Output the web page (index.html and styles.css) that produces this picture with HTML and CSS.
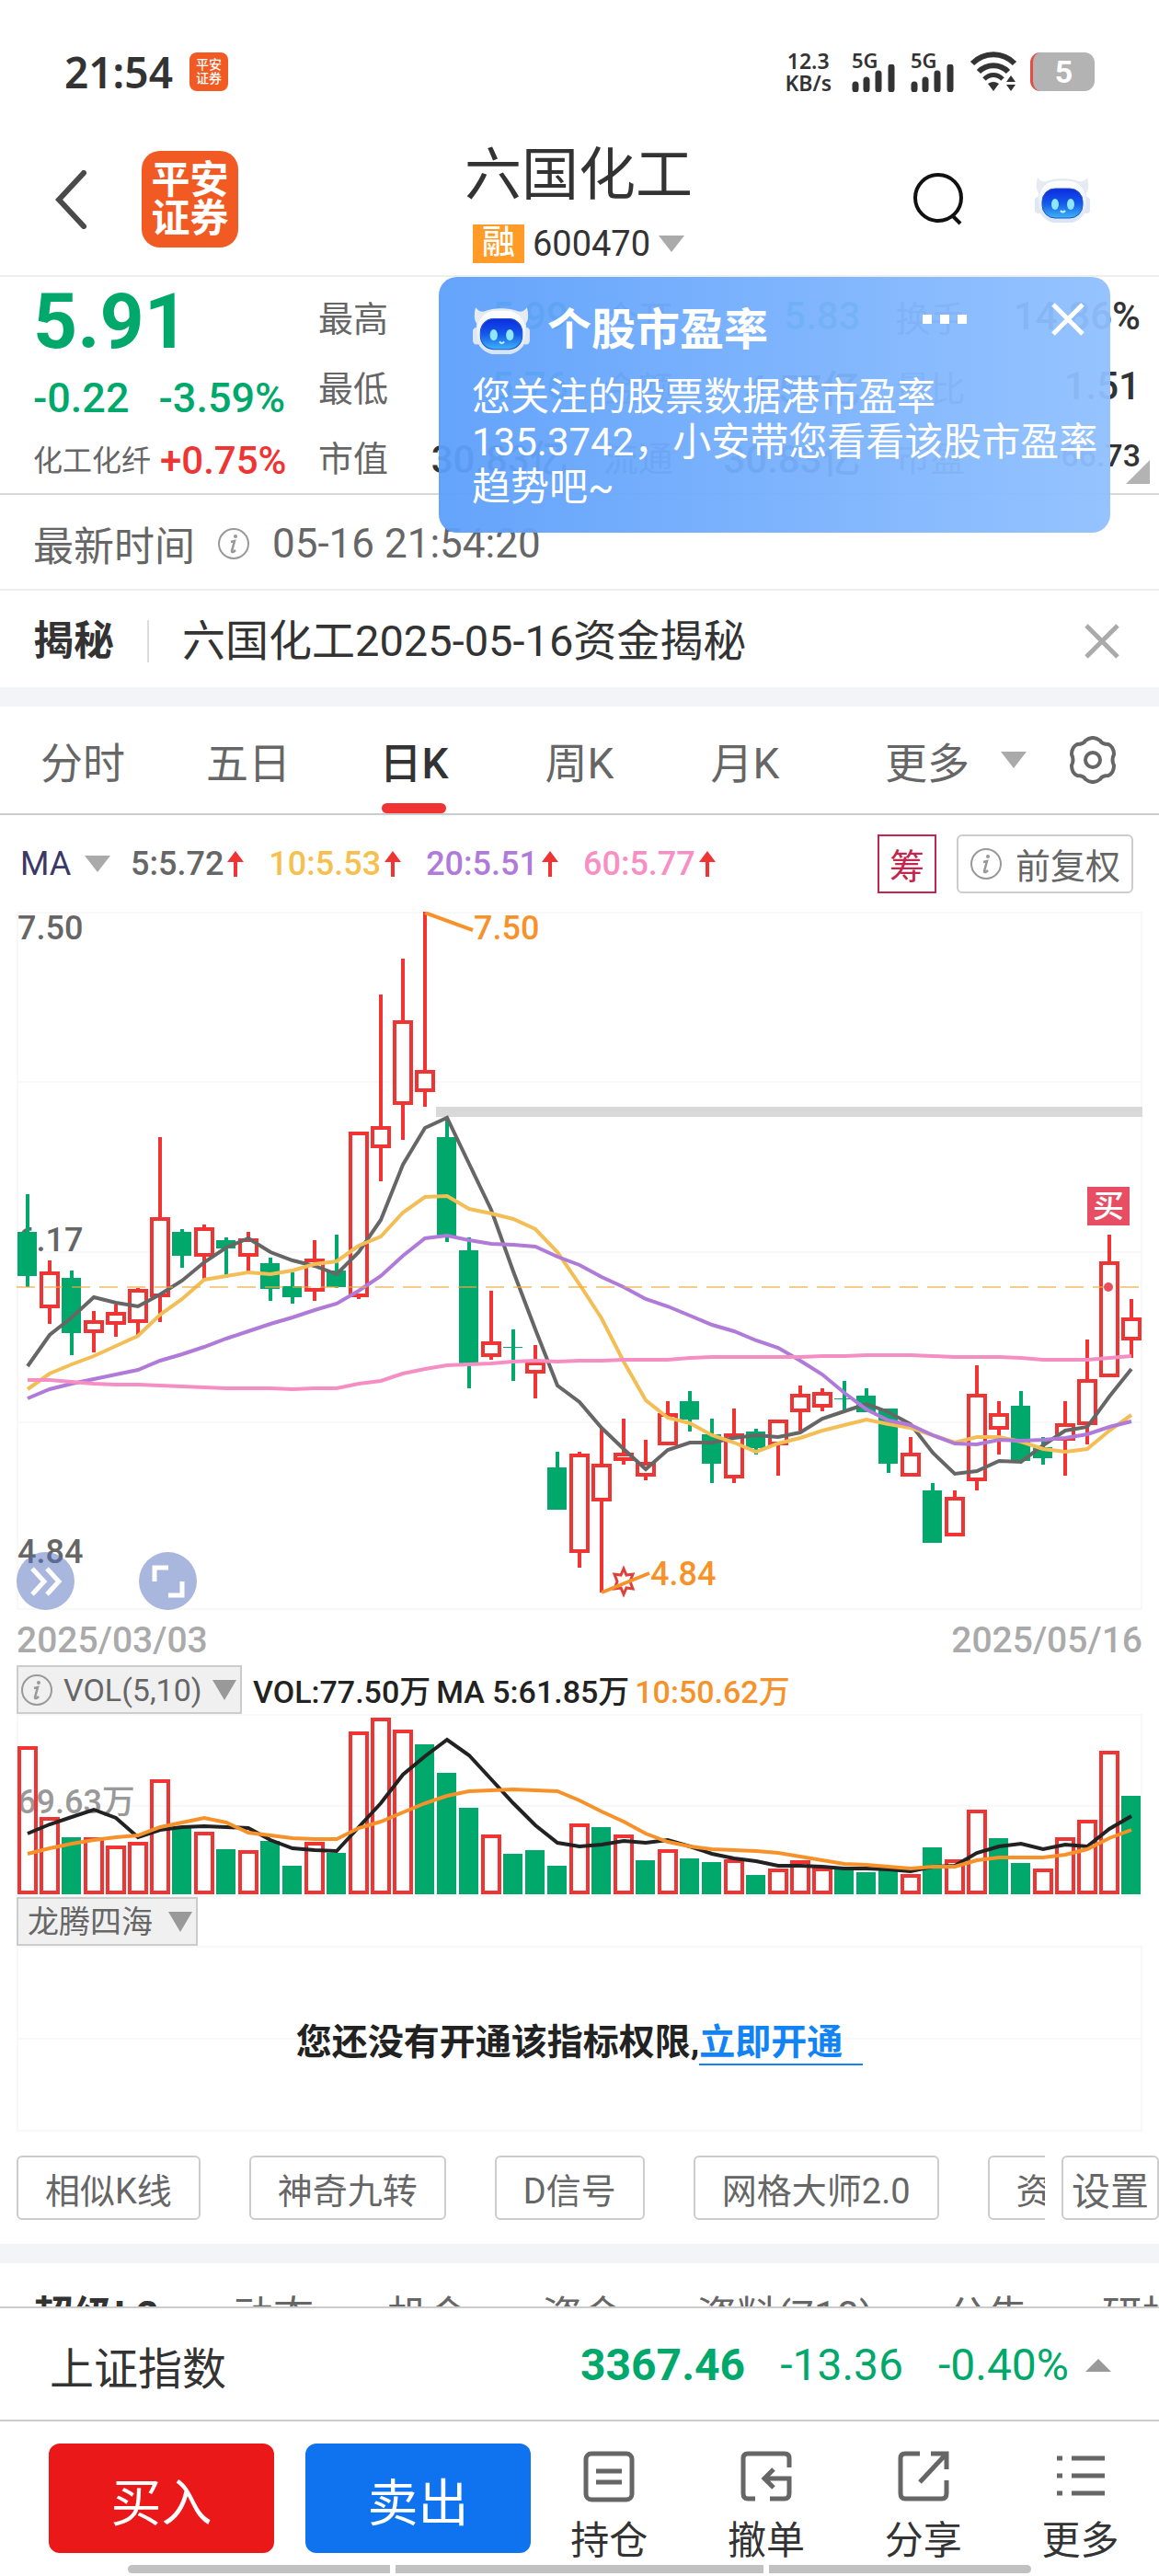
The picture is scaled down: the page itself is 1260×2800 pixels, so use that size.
FILE: index.html
```html
<!DOCTYPE html>
<html lang="zh-CN">
<head>
  <meta charset="UTF-8">
  <meta name="viewport" content="width=device-width, initial-scale=1.0">
  <title>六国化工 600470</title>
  <link rel="stylesheet" href="styles.css">
</head>
<body>

  <svg class="defs" aria-hidden="true">
    <defs>
      <linearGradient id="face" x1="0" y1="0" x2="0" y2="1">
        <stop offset="0" stop-color="#0d2be0" />
        <stop offset="0.5" stop-color="#1459ea" />
        <stop offset="1" stop-color="#3fb4f5" />
      </linearGradient>
      <linearGradient id="shell" x1="0" y1="0" x2="0" y2="1">
        <stop offset="0" stop-color="#ffffff" />
        <stop offset="1" stop-color="#d5e4f8" />
      </linearGradient>
    </defs>
    <symbol id="robot" viewBox="0 0 62 50">
      <rect x="1" y="22" width="8" height="18" rx="4" fill="#dfe7f3" />
      <rect x="53" y="22" width="8" height="18" rx="4" fill="#dfe7f3" />
      <path d="M4 1C2 8 2 16 7 20H55C60 16 60 8 58 1C55 5 52 6 48 5C40 1 22 1 14 5C10 6 7 5 4 1Z" fill="#e6eaf1" />
      <rect x="5" y="4" width="52" height="46" rx="20" fill="url(#shell)" stroke="#e3e8f0" />
      <rect x="9" y="13" width="44" height="32" rx="14" fill="url(#face)" stroke="#2152c8" />
      <ellipse cx="23" cy="30" rx="4" ry="6" fill="#8fe6ff" />
      <ellipse cx="40" cy="30" rx="4" ry="6" fill="#8fe6ff" />
      <path d="M29 37q2.500 3 5 0" fill="none" stroke="#bdf1ff" stroke-width="2" />
    </symbol>
    <symbol id="signal" viewBox="0 0 50 30">
      <path d="M4 22v5M16 17v10M29 10v17M43 3v24" stroke="#333" stroke-width="7" stroke-linecap="round" />
    </symbol>
    <symbol id="info" viewBox="0 0 36 36">
      <circle cx="18" cy="18" r="16" fill="none" stroke="#999" stroke-width="2" />
      <circle cx="20" cy="10" r="2" fill="#999" />
      <path d="M15 16l4-1-3 11c0 2 2 1 4-1" fill="none" stroke="#999" stroke-width="2.500" />
    </symbol>
    <symbol id="up" viewBox="0 0 18 28">
      <path d="M9 0L18 12H11V28H7V12H0Z" fill="#f03434" />
    </symbol>
  </svg>

  <div class="app">
    <!-- 状态栏 -->
    <div class="statusbar">
      <span class="clock">21:54</span>
      <span class="logo logo-small"><span>平安</span><span>证券</span></span>
      <div class="status-right">
        <div class="speed"><span>12.3</span><span>KB/s</span></div>
        <div class="cell"><span>5G</span><svg width="50" height="30"><use href="#signal" /></svg></div>
        <div class="cell"><span>5G</span><svg width="50" height="30"><use href="#signal" /></svg></div>
        <svg class="wifi" width="52" height="44" viewBox="0 0 52 44">
          <path d="M3 13C16 0 36 0 49 13" fill="none" stroke="#333" stroke-width="6" />
          <path d="M10 22C19 13 33 13 42 22" fill="none" stroke="#333" stroke-width="6" />
          <path d="M16 30C22 24 30 24 36 30" fill="none" stroke="#333" stroke-width="5" />
          <path d="M20 35Q26 31 32 35L26 43Z" fill="#333" />
          <path d="M40 33l5-7 5 7zM40 36h10l-5 7z" fill="#333" />
        </svg>
        <span class="battery">5</span>
      </div>
    </div>

    <!-- 标题栏 -->
    <header class="header">
      <div class="header-left">
        <button class="icon-btn" aria-label="返回">
          <svg width="34" height="64" viewBox="0 0 34 64"><path d="M31 3L4 32L31 61" fill="none" stroke="#4a4a4a" stroke-width="6" stroke-linecap="round" /></svg>
        </button>
        <span class="logo"><span>平安</span><span>证券</span></span>
      </div>
      <div class="header-title">
        <h1>六国化工</h1>
        <div class="code"><span class="rong">融</span>600470<span class="tri"></span></div>
      </div>
      <div class="header-right">
        <button class="icon-btn" aria-label="搜索">
          <svg width="56" height="60" viewBox="0 0 56 60"><circle cx="28" cy="28" r="25" fill="none" stroke="#111" stroke-width="4" /><path d="M43 47L52 56" stroke="#111" stroke-width="4" /></svg>
        </button>
        <button class="icon-btn" aria-label="小安">
          <svg width="62" height="50"><use href="#robot" /></svg>
        </button>
      </div>
    </header>

    <main class="content">
      <!-- 行情 -->
      <section class="quote">
        <div class="quote-price">
          <div class="price">5.91</div>
          <div class="change"><span>-0.22</span><span>-3.59%</span></div>
          <div class="sector">化工化纤 <b>+0.75%</b></div>
        </div>
        <table class="quote-table">
          <tr><th>最高</th><td class="down">5.99</td><th>今开</th><td class="down">5.83</td><th>换手</th><td>14.86%</td></tr>
          <tr><th>最低</th><td class="down">5.76</td><th>金额</th><td>4.57亿</td><th>量比</th><td>1.51</td></tr>
          <tr><th>市值</th><td>30.83亿</th><th>流通</th><td>30.83亿</td><th>市盈</th><td class="small">-66.73</td></tr>
        </table>
        <span class="corner"></span>

        <!-- 小安提示 -->
        <aside class="popup">
          <div class="popup-head">
            <svg width="64" height="52"><use href="#robot" /></svg>
            <h2>个股市盈率</h2>
            <button class="icon-btn popup-more" aria-label="更多">
              <svg width="48" height="12" viewBox="0 0 48 12"><path d="M0 1h10v10H0zM19 1h10v10H19zM38 1h10v10H38z" fill="#fff" /></svg>
            </button>
            <button class="icon-btn" aria-label="关闭">
              <svg width="36" height="36" viewBox="0 0 36 36"><path d="M2 2L34 34M34 2L2 34" stroke="#fff" stroke-width="5" /></svg>
            </button>
          </div>
          <p>您关注的股票数据港市盈率<br>135.3742，小安带您看看该股市盈率<br>趋势吧~</p>
        </aside>
      </section>

      <div class="time-row">
        <span>最新时间</span>
        <svg width="36" height="36"><use href="#info" /></svg>
        <span>05-16 21:54:20</span>
      </div>

      <div class="notice">
        <strong>揭秘</strong>
        <a href="#">六国化工2025-05-16资金揭秘</a>
        <button class="icon-btn" aria-label="关闭">
          <svg width="40" height="40" viewBox="0 0 40 40"><path d="M3 3L37 37M37 3L3 37" stroke="#aaa" stroke-width="5" /></svg>
        </button>
      </div>

      <div class="band"></div>

      <nav class="tabs">
        <button>分时</button>
        <button>五日</button>
        <button class="active">日K</button>
        <button>周K</button>
        <button>月K</button>
        <button class="tab-more">更多<span class="tri"></span></button>
        <button class="icon-btn" aria-label="图表设置">
          <svg width="52" height="52" viewBox="0 0 52 52">
            <path d="M18 5Q26 -1 34 5Q36 9 43 9Q49 12 49 20Q46 26 49 32Q49 40 43 43Q36 43 34 47Q26 53 18 47Q16 43 9 43Q3 40 3 32Q6 26 3 20Q3 12 9 9Q16 9 18 5Z" fill="none" stroke="#666" stroke-width="4" />
            <circle cx="26" cy="26" r="8" fill="none" stroke="#666" stroke-width="4" />
          </svg>
        </button>
      </nav>

      <div class="ma-row">
        <label class="ma-pick"><select aria-label="均线指标"><option>MA</option></select><span class="tri"></span></label>
        <div class="ma-list">
          <span class="ma ma5">5:5.72<svg width="18" height="28"><use href="#up" /></svg></span>
          <span class="ma ma10">10:5.53<svg width="18" height="28"><use href="#up" /></svg></span>
          <span class="ma ma20">20:5.51<svg width="18" height="28"><use href="#up" /></svg></span>
          <span class="ma ma60">60:5.77<svg width="18" height="28"><use href="#up" /></svg></span>
        </div>
        <button class="chips">筹</button>
        <button class="adjust"><svg width="36" height="36"><use href="#info" /></svg>前复权</button>
      </div>

      <!-- K线图 -->
      <section class="charts">
        <div class="kchart">
          <svg id="kline" viewBox="0 0 1224 759" role="img" aria-label="日K线"></svg>
          <div class="kchart-tools">
            <button aria-label="展开"><svg width="36" height="32" viewBox="0 0 36 32"><path d="M3 2L16 16L3 30M19 2L32 16L19 30" fill="none" stroke="#fff" stroke-width="5" /></svg></button>
            <button aria-label="全屏"><svg width="36" height="36" viewBox="0 0 36 36"><path d="M3 18V3H18M33 18V33H18" fill="none" stroke="#fff" stroke-width="5" /></svg></button>
          </div>
        </div>
        <div class="dates"><span>2025/03/03</span><span>2025/05/16</span></div>

        <div class="vol-head">
          <label class="picker"><svg width="36" height="36"><use href="#info" /></svg><select aria-label="成交量指标"><option>VOL(5,10)</option></select><span class="tri"></span></label>
          <span>VOL:77.50万</span><span>MA 5:61.85万</span><span class="orange">10:50.62万</span>
        </div>
        <svg id="volume" viewBox="0 0 1224 199" role="img" aria-label="成交量"></svg>

        <label class="picker"><select aria-label="副图指标"><option>龙腾四海</option></select><span class="tri"></span></label>
        <div class="locked"><p>您还没有开通该指标权限,<a href="#">立即开通</a></p></div>
      </section>

      <div class="pills">
        <div class="pill-list">
          <button>相似K线</button>
          <button>神奇九转</button>
          <button>D信号</button>
          <button>网格大师2.0</button>
          <button>资金</button>
        </div>
        <button class="pill-set">设置</button>
      </div>

      <div class="band"></div>

      <nav class="feed-tabs">
        <a href="#" class="active">超级L2</a>
        <a href="#">动态</a>
        <a href="#">机会</a>
        <a href="#">资金</a>
        <a href="#">资料(710)</a>
        <a href="#">公告</a>
        <a href="#">研报</a>
      </nav>
    </main>

    <!-- 底部 -->
    <footer class="footer">
      <div class="index-bar">
        <span class="index-name">上证指数</span>
        <b>3367.46</b><span>-13.36</span><span>-0.40%</span>
        <span class="tri tri-up"></span>
      </div>
      <div class="actions">
        <button class="trade buy">买入</button>
        <button class="trade sell">卖出</button>
        <button class="action">
          <svg width="56" height="56" viewBox="0 0 56 56"><rect x="3" y="3" width="50" height="50" rx="6" /><path d="M14 22H42M14 34H42" /></svg>持仓
        </button>
        <button class="action">
          <svg width="56" height="56" viewBox="0 0 56 56"><path d="M53 18V8Q53 3 48 3H8Q3 3 3 8V46Q3 52 8 52H16M32 52H48Q53 52 53 46V30H26M36 20L26 30L36 40" /></svg>撤单
        </button>
        <button class="action">
          <svg width="56" height="56" viewBox="0 0 56 56"><path d="M24 3H8Q3 3 3 8V46Q3 52 8 52H48Q53 52 53 46V32M36 3H53V20M53 3L24 34" /></svg>分享
        </button>
        <button class="action">
          <svg width="56" height="56" viewBox="0 0 56 56"><path d="M2 8H8M18 8H54M2 27H8M18 27H54M2 46H8M18 46H54" /></svg>更多
        </button>
      </div>
      <div class="homebar"><i></i><i></i><i></i></div>
    </footer>
  </div>

  <script src="chart.js"></script>
</body>
</html>
```

FILE: styles.css
```css
* {
  box-sizing: border-box;
}
body {
  margin: 0;
  background: #fff;
  color: #333;
  font-family: Roboto, "Noto Sans CJK SC", sans-serif;
  font-size: 38px;
}
button, select {
  font: inherit;
  color: inherit;
  background: none;
  border: none;
  padding: 0;
  margin: 0;
  appearance: none;
  white-space: nowrap;
  cursor: pointer;
}
a {
  color: inherit;
  text-decoration: none;
}
svg {
  flex: none;
}
h1, h2, p {
  margin: 0;
}
.defs {
  position: absolute;
  width: 0;
  height: 0;
}
.app {
  display: flex;
  flex-direction: column;
  height: 100vh;
}
.icon-btn {
  display: flex;
}
.tri {
  border: 14px solid transparent;
  border-top: 18px solid #aaa;
  border-bottom: 0;
}
.tri-up {
  border-top: 0;
  border-bottom: 14px solid #999;
}

/* 状态栏 */
.statusbar {
  display: flex;
  align-items: center;
  flex: none;
  height: 128px;
  padding: 28px 70px 0;
}
.clock {
  font-family: "Noto Sans", sans-serif;
  font-size: 46px;
  font-weight: 600;
}
.logo {
  display: flex;
  flex-direction: column;
  align-items: center;
  justify-content: center;
  width: 105px;
  height: 105px;
  border-radius: 20px;
  background: #f15a22;
  color: #fff;
  font-size: 42px;
  font-weight: bold;
  line-height: 42px;
}
.logo-small {
  width: 42px;
  height: 42px;
  margin-left: 18px;
  border-radius: 8px;
  font-size: 14px;
  font-weight: 500;
  line-height: 15px;
}
.status-right {
  display: flex;
  align-items: center;
  gap: 14px;
  margin-left: auto;
}
.speed {
  display: flex;
  flex-direction: column;
  align-items: center;
  margin-right: 8px;
  font-family: "Noto Sans", sans-serif;
  font-size: 23px;
  font-weight: 600;
  line-height: 24px;
}
.cell {
  position: relative;
  padding-top: 14px;
}
.cell svg {
  display: block;
}
.cell span {
  position: absolute;
  top: -1px;
  left: 0;
  font-family: "Noto Sans", sans-serif;
  font-size: 22px;
  font-weight: 600;
  line-height: 20px;
}
.battery {
  width: 70px;
  height: 42px;
  border-left: 3px solid #e64c43;
  border-radius: 11px;
  background: #b3b3b3;
  color: #fff;
  font-size: 34px;
  font-weight: bold;
  line-height: 42px;
  text-align: center;
}

/* 标题栏 */
.header {
  display: grid;
  grid-template-columns: 1fr auto 1fr;
  align-items: center;
  flex: none;
  height: 173px;
  padding: 6px 74px 0 60px;
  border-bottom: 2px solid #eee;
}
.header-left {
  display: flex;
  align-items: center;
  gap: 60px;
}
.header-title {
  display: flex;
  flex-direction: column;
  align-items: center;
  gap: 16px;
  padding: 8px 0 0 12px;
}
.header-title h1 {
  font-size: 62px;
  font-weight: normal;
  line-height: 72px;
}
.code {
  display: flex;
  align-items: center;
  gap: 9px;
  line-height: 44px;
}
.rong {
  width: 56px;
  height: 42px;
  background: #ff9b26;
  color: #fff;
  font-size: 36px;
  font-weight: 500;
  line-height: 40px;
  text-align: center;
}
.header-right {
  display: flex;
  align-items: center;
  justify-content: flex-end;
  gap: 76px;
}

.content {
  flex: 1;
  min-height: 0;
  overflow: hidden;
}

/* 行情 */
.quote {
  position: relative;
  display: flex;
  height: 237px;
  padding: 4px 20px 0 36px;
  border-bottom: 2px solid #d8d8d8;
}
.quote-price {
  flex: none;
  width: 310px;
  padding-top: 4px;
  color: #00a96b;
}
.price {
  font-size: 84px;
  font-weight: bold;
  line-height: 82px;
}
.change {
  display: flex;
  gap: 32px;
  margin: 20px 0 24px;
  font-size: 45px;
  font-weight: 500;
  line-height: 44px;
}
.sector {
  display: flex;
  align-items: center;
  gap: 10px;
  color: #666;
  font-size: 32px;
  line-height: 44px;
}
.sector b {
  color: #f03434;
  font-size: 42px;
  font-weight: 500;
}
.quote-table {
  flex: 1;
  height: 228px;
  border-collapse: collapse;
}
.quote-table th, .quote-table td {
  height: 76px;
  padding: 0;
  white-space: nowrap;
}
.quote-table th {
  color: #666;
  font-weight: normal;
  text-align: left;
}
.quote-table td + th {
  padding-left: 38px;
}
.quote-table td {
  font-size: 42px;
  font-weight: 500;
  text-align: right;
}
.quote-table .small {
  font-size: 34px;
}
.quote-table .down {
  color: #00a96b;
}
.corner {
  position: absolute;
  right: 10px;
  bottom: 10px;
  border-bottom: 26px solid #b3b3b3;
  border-left: 26px solid transparent;
}
.popup {
  position: absolute;
  top: 0;
  right: 53px;
  z-index: 1;
  width: 730px;
  height: 278px;
  padding: 28px 28px 0 36px;
  border-radius: 20px;
  background: linear-gradient(90deg, rgba(92, 159, 251, .95), rgba(144, 192, 255, .95));
  color: #fff;
}
.popup-head {
  display: flex;
  align-items: center;
  height: 60px;
}
.popup-head h2 {
  flex: 1;
  margin-left: 18px;
  font-size: 48px;
  line-height: 60px;
}
.popup-head button {
  margin-bottom: 24px;
}
.popup-head .popup-more {
  margin-right: 92px;
}
.popup p {
  margin-top: 18px;
  font-size: 42px;
  line-height: 49px;
  white-space: nowrap;
}

.time-row {
  display: flex;
  align-items: center;
  gap: 24px;
  height: 104px;
  padding: 4px 38px 0 36px;
  border-bottom: 2px solid #eee;
  color: #666;
  font-size: 44px;
}
.notice {
  display: flex;
  align-items: center;
  height: 105px;
  padding: 4px 42px 0 36px;
  font-size: 44px;
}
.notice strong {
  padding-right: 36px;
  border-right: 2px solid #ddd;
  line-height: 46px;
}
.notice a {
  flex: 1;
  padding-left: 36px;
  font-size: 47px;
  line-height: 52px;
}
.band {
  height: 21px;
  background: #f2f4f8;
}

/* 周期切换 */
.tabs {
  display: flex;
  height: 118px;
  padding-right: 46px;
  border-bottom: 2px solid #ccc;
  color: #666;
  font-size: 46px;
}
.tabs button {
  position: relative;
  flex: none;
  width: 180px;
}
.tabs .active {
  color: #333;
  font-weight: 500;
}
.tabs .active::after {
  content: "";
  position: absolute;
  bottom: 0;
  left: 55px;
  width: 70px;
  height: 11px;
  border-radius: 6px;
  background: #f03434;
}
.tabs .tab-more {
  display: flex;
  align-items: center;
  justify-content: center;
  gap: 34px;
  flex: 1;
  padding-left: 16px;
}
.tabs .icon-btn {
  align-items: center;
  width: auto;
}
.ma-row {
  display: flex;
  align-items: center;
  gap: 22px;
  height: 105px;
  padding: 0 28px 0 22px;
}
.ma-pick {
  display: flex;
  align-items: center;
  gap: 14px;
  color: #3b3866;
  font-size: 36px;
}
.ma-list {
  display: flex;
  gap: 27px;
}
.ma {
  display: flex;
  align-items: center;
  gap: 4px;
  font-size: 36px;
  font-weight: 500;
}
.ma5 { color: #666; }
.ma10 { color: #f5c04e; }
.ma20 { color: #b07ada; }
.ma60 { color: #f88fc4; }
.chips {
  width: 64px;
  height: 64px;
  margin-left: auto;
  border: 2px solid #c2264e;
  color: #c2264e;
}
.adjust {
  display: flex;
  align-items: center;
  gap: 14px;
  height: 64px;
  padding: 0 12px;
  border: 2px solid #ccc;
  border-radius: 6px;
  color: #666;
}

/* 图表 */
.charts {
  padding: 0 18px;
}
.charts > svg, .kchart > svg {
  display: block;
  width: 100%;
}
.kchart {
  position: relative;
}
.kchart-tools {
  position: absolute;
  bottom: 0;
  left: 0;
  display: flex;
  gap: 70px;
}
.kchart-tools button {
  display: flex;
  align-items: center;
  justify-content: center;
  width: 63px;
  height: 63px;
  border-radius: 50%;
  background: rgba(83, 112, 190, .5);
}
.dates {
  display: flex;
  justify-content: space-between;
  padding-top: 6px;
  color: #aaa;
  font-size: 39px;
  font-weight: 500;
  line-height: 54px;
}
.vol-head {
  display: flex;
  align-items: center;
  gap: 6px;
  color: #222;
  font-size: 34px;
  font-weight: 500;
  white-space: nowrap;
}
.vol-head .picker {
  margin-right: 6px;
}
.orange {
  color: #f7922a;
}
.picker {
  display: inline-flex;
  align-items: center;
  gap: 11px;
  height: 53px;
  padding: 0 4px 0 2px;
  border: 2px solid #ccc;
  background: #f0f0f0;
  color: #666;
  font-size: 34px;
  font-weight: normal;
  vertical-align: top;
}
.charts > .picker {
  gap: 17px;
  padding-left: 10px;
}
.picker .tri {
  border-width: 22px 13px 0;
  border-top-color: #999;
}
.locked {
  display: flex;
  align-items: center;
  justify-content: center;
  height: 202px;
  border: 2px solid #f8f8f8;
  background: linear-gradient(#f8f8f8, #f8f8f8) center / 100% 2px no-repeat;
  color: #222;
  font-size: 39px;
  font-weight: bold;
}
.locked a {
  padding-right: 22px;
  border-bottom: 2px solid #1283f5;
  color: #1283f5;
}

.pills {
  display: flex;
  gap: 18px;
  padding: 26px 0 26px 18px;
}
.pill-list {
  display: flex;
  flex: 1;
  gap: 53px;
  min-width: 0;
  overflow: hidden;
}
.pills button {
  flex: none;
  height: 70px;
  padding: 0 29px;
  border: 2px solid #ccc;
  border-radius: 6px;
  color: #666;
}
.pills .pill-set {
  padding: 0 9px;
  font-size: 42px;
}
.feed-tabs {
  display: flex;
  gap: 80px;
  padding: 0 36px;
  color: #666;
  font-size: 44px;
  line-height: 116px;
  white-space: nowrap;
}
.feed-tabs .active {
  color: #333;
  font-weight: bold;
}

/* 底部 */
.footer {
  position: relative;
  flex: none;
  background: #fff;
}
.index-bar {
  display: flex;
  align-items: center;
  gap: 38px;
  height: 125px;
  padding: 2px 52px 0 54px;
  border-top: 2px solid #ccc;
  border-bottom: 2px solid #ccc;
  color: #00a96b;
  font-size: 48px;
}
.index-name {
  margin-right: auto;
  color: #333;
}
.index-bar .tri {
  margin-left: -20px;
}
.actions {
  display: flex;
  height: 168px;
  padding: 24px 0 0 53px;
}
.trade {
  flex: none;
  width: 245px;
  height: 119px;
  margin-right: 34px;
  border-radius: 12px;
  background: #ea1818;
  color: #fff;
  font-size: 55px;
}
.trade.sell {
  margin-right: 0;
  background: #0f72ee;
}
.action {
  display: flex;
  flex: 1;
  flex-direction: column;
  align-items: center;
  padding-top: 8px;
  gap: 20px;
  font-size: 42px;
  line-height: 44px;
}
.action svg {
  fill: none;
  stroke: #666;
  stroke-width: 5;
}
.homebar {
  position: absolute;
  right: 11%;
  bottom: 3px;
  left: 11%;
  display: flex;
  gap: 6px;
}
.homebar i {
  flex: 1;
  height: 9px;
  background: #c1c1c1;
}
.homebar i:nth-child(2) {
  flex: 1.4;
}
.homebar i:first-child {
  border-radius: 5px 0 0 5px;
}
.homebar i:last-child {
  border-radius: 0 5px 5px 0;
}
```

FILE: chart.js
```js
const RED = '#f03434';
const GREEN = '#00a96b';
const STEP = 24;

// [high, bodyTop, bodyBottom, low, up]
const candles = [
  [307, 348, 396, 408, 0], [379, 391, 431, 448, 1], [390, 398, 458, 482, 0], [434, 444, 458, 479, 1],
  [427, 435, 449, 462, 1], [409, 410, 447, 462, 1], [245, 332, 419, 446, 1], [345, 348, 374, 387, 0],
  [340, 343, 375, 400, 1], [354, 357, 366, 398, 0], [348, 355, 375, 393, 1], [376, 382, 410, 423, 0],
  [392, 407, 419, 426, 0], [357, 377, 413, 423, 1], [351, 390, 408, 409, 0], [239, 239, 419, 421, 1],
  [90, 233, 257, 293, 1], [51, 118, 210, 248, 1], [0, 172, 196, 212, 1], [223, 245, 353, 359, 0],
  [354, 368, 493, 518, 0], [412, 467, 484, 487, 1], [454, 473, 474, 510, 0], [471, 489, 502, 529, 1],
  [587, 604, 650, 650, 0], [587, 589, 697, 713, 1], [561, 600, 641, 740, 1], [551, 588, 597, 601, 1],
  [574, 598, 614, 618, 1], [532, 545, 580, 580, 1], [521, 532, 552, 565, 0], [551, 568, 600, 621, 0],
  [540, 567, 616, 621, 1], [562, 565, 583, 590, 0], [552, 552, 580, 613, 1], [515, 524, 544, 564, 1],
  [518, 522, 539, 543, 1], [510, 529, 530, 542, 0], [518, 526, 544, 544, 0], [540, 540, 600, 610, 0],
  [571, 588, 614, 614, 1], [621, 629, 686, 686, 0], [629, 636, 679, 679, 1], [493, 524, 619, 629, 1],
  [532, 545, 563, 590, 1], [521, 537, 597, 597, 0], [571, 582, 594, 601, 0], [532, 556, 575, 613, 1],
  [465, 508, 558, 579, 1], [351, 380, 506, 506, 1], [421, 441, 466, 485, 1]
];

const averages = [
  ['#666', [494, 460, 441, 419, 425, 429, 416, 401, 381, 365, 355, 370, 379, 385, 394, 370, 335, 275, 235, 224, 274, 324, 391, 454, 515, 533, 561, 584, 606, 585, 577, 577, 572, 569, 571, 566, 551, 543, 535, 544, 557, 588, 611, 608, 597, 598, 580, 564, 560, 527, 497]],
  ['#f3be55', [519, 502, 492, 483, 472, 461, 438, 421, 400, 396, 392, 394, 390, 383, 380, 363, 353, 327, 310, 309, 323, 328, 334, 345, 370, 405, 442, 489, 531, 550, 556, 569, 577, 587, 578, 572, 564, 558, 552, 557, 561, 569, 577, 571, 571, 576, 584, 587, 584, 564, 547]],
  ['#b07ad8', [529, 519, 513, 508, 503, 498, 488, 481, 473, 464, 456, 448, 441, 433, 426, 412, 396, 374, 355, 352, 357, 361, 362, 364, 375, 384, 397, 408, 421, 429, 439, 449, 456, 466, 474, 488, 503, 523, 541, 553, 558, 569, 578, 579, 574, 575, 574, 572, 568, 560, 554]],
  ['#f58fc3', [509, 509, 511, 513, 514, 514, 515, 516, 517, 518, 518, 518, 519, 518, 518, 513, 510, 502, 497, 493, 492, 491, 489, 488, 489, 488, 488, 487, 487, 487, 485, 484, 484, 484, 484, 484, 483, 483, 482, 482, 482, 483, 484, 484, 484, 485, 487, 487, 487, 485, 483]]
];

// [top, up]
const volumes = [
  [35, 1], [112, 1], [134, 0], [134, 1], [143, 1], [139, 1], [71, 1], [124, 0], [128, 1], [147, 0],
  [148, 1], [138, 0], [165, 0], [139, 1], [151, 0], [19, 1], [4, 1], [17, 1], [33, 0], [64, 0],
  [102, 0], [131, 1], [152, 0], [148, 0], [165, 0], [119, 1], [123, 0], [131, 1], [159, 0], [147, 1],
  [157, 0], [161, 0], [158, 1], [175, 0], [168, 1], [159, 1], [167, 1], [169, 0], [172, 0], [169, 0],
  [174, 1], [145, 0], [158, 1], [104, 1], [135, 0], [162, 0], [168, 1], [134, 1], [115, 1], [40, 1], [89, 0]
];

const volAverages = [
  ['#222', [130, 120, 112, 104, 113, 134, 126, 123, 122, 123, 124, 137, 146, 148, 149, 123, 97, 66, 46, 28, 45, 71, 97, 121, 140, 144, 142, 138, 140, 137, 144, 152, 157, 160, 165, 165, 166, 168, 168, 169, 171, 166, 165, 151, 144, 141, 147, 142, 144, 125, 111]],
  ['#f7922a', [152, 146, 141, 137, 134, 132, 123, 118, 113, 118, 129, 132, 135, 136, 136, 124, 117, 107, 97, 89, 84, 83, 82, 83, 84, 94, 106, 117, 130, 139, 144, 147, 148, 149, 151, 155, 159, 163, 164, 166, 168, 166, 166, 159, 156, 156, 156, 153, 147, 135, 126]]
];

const cx = i => 12 + i * STEP;

function polyline([color, points]) {
  const list = points.map((y, i) => `${cx(i)},${y}`).join(' ');
  return `<polyline points="${list}" fill="none" stroke="${color}" stroke-width="4" />`;
}

function grid(height, rows) {
  const lines = rows.map(y => `M0 ${y}H1224`).join('');
  return `<path d="M1 1H1223V${height - 1}H1Z${lines}" fill="none" stroke="#f8f8f8" stroke-width="2" />`;
}

function candle([high, top, bottom, low, up], i) {
  const x = cx(i);
  const color = up ? RED : GREEN;
  const wick = `<path d="M${x} ${high}V${top}M${x} ${bottom}V${low}" stroke="${color}" stroke-width="4" />`;
  const body = up
    ? `<rect x="${x - 9}" y="${top + 2}" width="18" height="${Math.max(bottom - top - 4, 2)}" fill="#fff" stroke="${color}" stroke-width="4" />`
    : `<rect x="${x - 11}" y="${top}" width="21" height="${bottom - top}" fill="${color}" />`;
  return wick + body;
}

function bar([top, up], i) {
  const x = cx(i);
  return up
    ? `<rect x="${x - 9}" y="${top + 2}" width="18" height="${192 - top}" fill="none" stroke="${RED}" stroke-width="4" />`
    : `<rect x="${x - 11}" y="${top}" width="21" height="${196 - top}" fill="${GREEN}" />`;
}

const label = (x, y, text, color) =>
  `<text x="${x}" y="${y}" fill="${color}" font-size="36" font-weight="500">${text}</text>`;

document.getElementById('kline').innerHTML =
  grid(759, [185, 370, 555]) +
  label(1, 30, '7.50', '#666') + label(1, 369, '6.17', '#666') + label(1, 708, '4.84', '#666') +
  '<rect x="456" y="212" width="768" height="11" fill="#d9d9d9" />' +
  candles.map(candle).join('') +
  averages.map(polyline).join('') +
  '<path d="M0 408H1224" stroke="#f5a93c" stroke-opacity="0.6" stroke-width="2" stroke-dasharray="20 10" />' +
  // 信号
  '<path d="M660 714l3 7 7-1-3 8 3 8-7-1-3 7-3-7-7 1 3-8-3-8 7 1z" fill="#fff" stroke="#e0403c" stroke-width="3" />' +
  '<path d="M444 1L496 20M636 740L688 719" stroke="#f7922a" stroke-width="4" />' +
  label(497, 30, '7.50', '#f7922a') + label(689, 732, '4.84', '#f7922a') +
  '<circle cx="1187" cy="408" r="5" fill="#e8505f" />' +
  '<rect x="1164" y="299" width="46" height="42" fill="#e84e63" />' +
  '<text x="1187" y="332" fill="#fff" font-size="34" font-weight="500" text-anchor="middle">买</text>';

document.getElementById('volume').innerHTML =
  grid(199, [100]) +
  label(1, 108, '69.63万', '#999') +
  volumes.map(bar).join('') +
  volAverages.map(polyline).join('');
```
